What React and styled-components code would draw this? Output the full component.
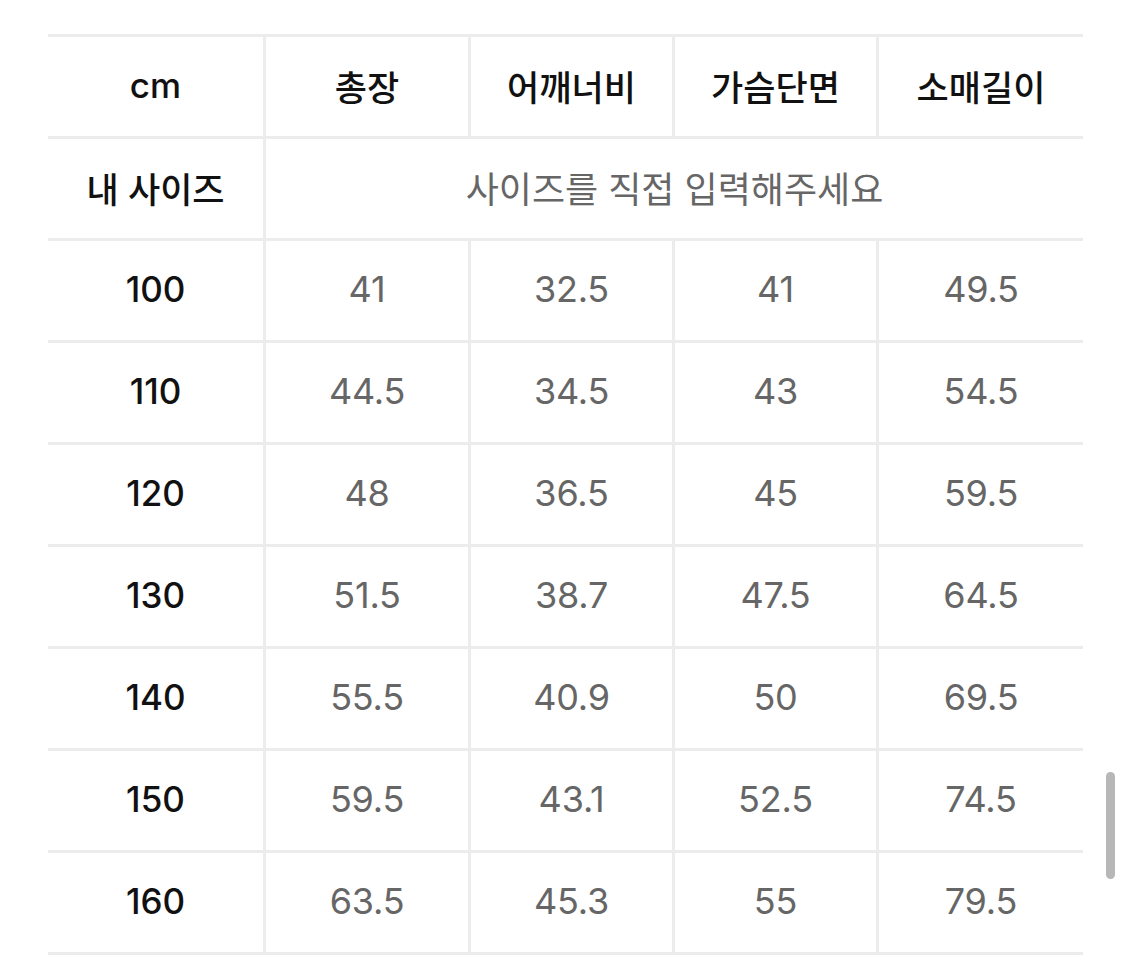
import React from "react";
import styled, { createGlobalStyle } from "styled-components";

const Global = createGlobalStyle`
  html, body { margin: 0; padding: 0; background: #fff; }
  body { font-family: "Inter", "Noto Sans CJK KR", sans-serif; }
`;

const Page = styled.div`
  position: relative;
  width: 1125px;
  height: 978px;
  padding: 34px 0 0 48px;
  box-sizing: border-box;
`;

const Table = styled.div`
  display: grid;
  grid-template-columns: 218px 205px 204px 204px 204px;
  width: 1035px;
  border-top: 3px solid #ececec;
`;

const Cell = styled.div`
  height: 102px;
  box-sizing: border-box;
  padding-bottom: 3px;
  display: flex;
  align-items: center;
  justify-content: center;
  border-bottom: 3px solid #ececec;
  border-right: ${(p) => (p.$last ? "none" : "3px solid #ececec")};
  grid-column: ${(p) => p.$span || "auto"};
  font-size: ${(p) => (p.$kind === "data" || p.$kind === "hint" ? "36px" : "35px")};
  font-weight: ${(p) => (p.$kind === "data" || p.$kind === "hint" ? 400 : p.$kind === "label" ? 550 : 500)};
  color: ${(p) => (p.$kind === "data" || p.$kind === "hint" ? "#666" : "#111")};
  letter-spacing: ${(p) => (p.$kind === "data" ? "-0.2px" : "0")};
  white-space: nowrap;
`;

const Scrollbar = styled.div`
  position: absolute;
  left: 1106px;
  top: 772px;
  width: 9px;
  height: 107px;
  border-radius: 5px;
  background: #b7b7b7;
`;

const headers = ["총장", "어깨너비", "가슴단면", "소매길이"];
const rows = [
  ["100", "41", "32.5", "41", "49.5"],
  ["110", "44.5", "34.5", "43", "54.5"],
  ["120", "48", "36.5", "45", "59.5"],
  ["130", "51.5", "38.7", "47.5", "64.5"],
  ["140", "55.5", "40.9", "50", "69.5"],
  ["150", "59.5", "43.1", "52.5", "74.5"],
  ["160", "63.5", "45.3", "55", "79.5"],
];

export default function App() {
  return (
    <Page>
      <Global />
      <Table>
        <Cell $kind="head">cm</Cell>
        {headers.map((h, i) => (
          <Cell key={h} $kind="head" $last={i === headers.length - 1}>
            {h}
          </Cell>
        ))}
        <Cell $kind="head">내 사이즈</Cell>
        <Cell $kind="hint" $span="2 / 6" $last>
          사이즈를 직접 입력해주세요
        </Cell>
        {rows.map((r) => (
          <React.Fragment key={r[0]}>
            <Cell $kind="label">{r[0]}</Cell>
            {r.slice(1).map((v, i) => (
              <Cell key={i} $kind="data" $last={i === 3}>
                {v}
              </Cell>
            ))}
          </React.Fragment>
        ))}
      </Table>
      <Scrollbar />
    </Page>
  );
}
